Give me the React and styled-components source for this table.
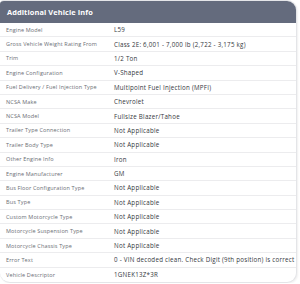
import React from 'react';
import styled, { createGlobalStyle } from 'styled-components';

const GlobalStyle = createGlobalStyle`
  body {
    margin: 0;
    background: #ffffff;
    font-family: "Open Sans", "Liberation Sans", sans-serif;
  }
`;

const Card = styled.div`
  width: 297px;
  height: 283px;
  box-sizing: border-box;
  border: 1px solid #e4e5e8;
  border-left: none;
  border-radius: 4px 10px 10px 10px;
  overflow: hidden;
  background: #ffffff;
  box-shadow: 1px 1px 2px rgba(0, 0, 0, 0.06);
`;

const Header = styled.div`
  height: 22px;
  display: flex;
  align-items: center;
  padding-left: 7px;
  background: #646b7d;
  color: #ffffff;
  font-size: 7.4px;
  font-weight: 700;
  letter-spacing: 0.1px;
`;

const Row = styled.div`
  display: grid;
  grid-template-columns: 108px 1fr;
  align-items: center;
  height: 14.4px;
  box-sizing: border-box;
  padding-left: 6px;
  border-bottom: ${p => (p.last ? 'none' : '1px solid #ececee')};
  white-space: nowrap;
`;

const Label = styled.span`
  font-size: 5.5px;
  letter-spacing: 0.15px;
  color: #6b6e75;
`;

const Value = styled.span`
  font-size: 6.2px;
  letter-spacing: 0.25px;
  font-weight: 500;
  color: #34373d;
`;

const rows = [
  ['Engine Model', 'L59'],
  ['Gross Vehicle Weight Rating From', 'Class 2E: 6,001 - 7,000 lb (2,722 - 3,175 kg)'],
  ['Trim', '1/2 Ton'],
  ['Engine Configuration', 'V-Shaped'],
  ['Fuel Delivery / Fuel Injection Type', 'Multipoint Fuel Injection (MPFI)'],
  ['NCSA Make', 'Chevrolet'],
  ['NCSA Model', 'Fullsize Blazer/Tahoe'],
  ['Trailer Type Connection', 'Not Applicable'],
  ['Trailer Body Type', 'Not Applicable'],
  ['Other Engine Info', 'Iron'],
  ['Engine Manufacturer', 'GM'],
  ['Bus Floor Configuration Type', 'Not Applicable'],
  ['Bus Type', 'Not Applicable'],
  ['Custom Motorcycle Type', 'Not Applicable'],
  ['Motorcycle Suspension Type', 'Not Applicable'],
  ['Motorcycle Chassis Type', 'Not Applicable'],
  ['Error Text', '0 - VIN decoded clean. Check Digit (9th position) is correct'],
  ['Vehicle Descriptor', '1GNEK13Z*3R'],
];

const App = () => (
  <>
    <GlobalStyle />
    <Card>
      <Header>Additional Vehicle Info</Header>
      {rows.map(([label, value], i) => (
        <Row key={label} last={i === rows.length - 1}>
          <Label>{label}</Label>
          <Value>{value}</Value>
        </Row>
      ))}
    </Card>
  </>
);

export default App;
